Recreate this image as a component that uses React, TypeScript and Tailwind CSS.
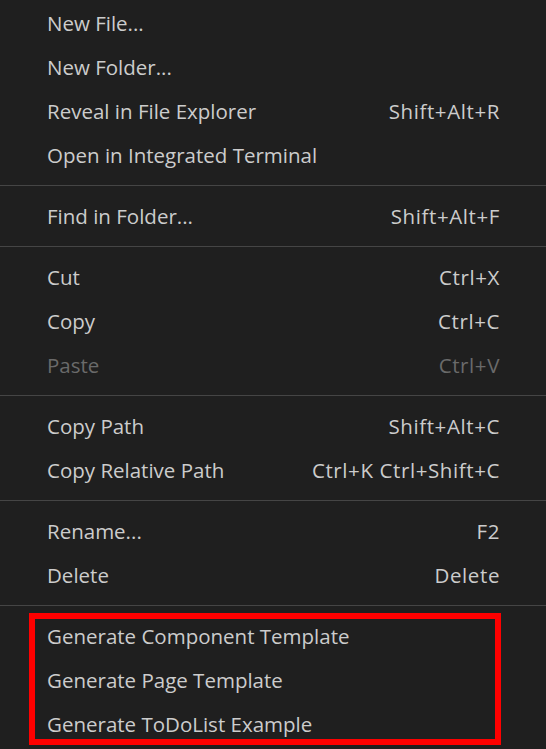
import React from "react";

type Item = { label: string; keys?: string; disabled?: boolean };

const groups: Item[][] = [
  [
    { label: "New File..." },
    { label: "New Folder..." },
    { label: "Reveal in File Explorer", keys: "Shift+Alt+R" },
    { label: "Open in Integrated Terminal" },
  ],
  [{ label: "Find in Folder...", keys: "Shift+Alt+F" }],
  [
    { label: "Cut", keys: "Ctrl+X" },
    { label: "Copy", keys: "Ctrl+C" },
    { label: "Paste", keys: "Ctrl+V", disabled: true },
  ],
  [
    { label: "Copy Path", keys: "Shift+Alt+C" },
    { label: "Copy Relative Path", keys: "Ctrl+K Ctrl+Shift+C" },
  ],
  [
    { label: "Rename...", keys: "F2" },
    { label: "Delete", keys: "Delete" },
  ],
  [
    { label: "Generate Component Template" },
    { label: "Generate Page Template" },
    { label: "Generate ToDoList Example" },
  ],
];

function Row({ item }: { item: Item }) {
  return (
    <div
      className={`flex h-[44px] items-center justify-between pl-[47px] pr-[46px] ${
        item.disabled ? "text-[#6a6a6a]" : "text-[#cccccc]"
      }`}
    >
      <span>{item.label}</span>
      {item.keys && <span className="tracking-[0.6px]">{item.keys}</span>}
    </div>
  );
}

export default function App() {
  return (
    <div
      className="relative h-[749px] w-[546px] overflow-hidden bg-[#1f1f1f] pt-px text-[20.5px] leading-none"
      style={{ fontFamily: '"Open Sans", "Noto Sans", sans-serif' }}
    >
      {groups.map((g, i) => (
        <div key={i}>
          {i > 0 && (
            <div className="flex h-[17px] items-center">
              <div className="h-px w-full bg-[#454545]" />
            </div>
          )}
          {g.map((item) => (
            <Row key={item.label} item={item} />
          ))}
        </div>
      ))}

      {/* annotation box */}
      <div className="absolute left-[29px] top-[613px] h-[132px] w-[472px] border-[6px] border-[#ff0000]" />
    </div>
  );
}
